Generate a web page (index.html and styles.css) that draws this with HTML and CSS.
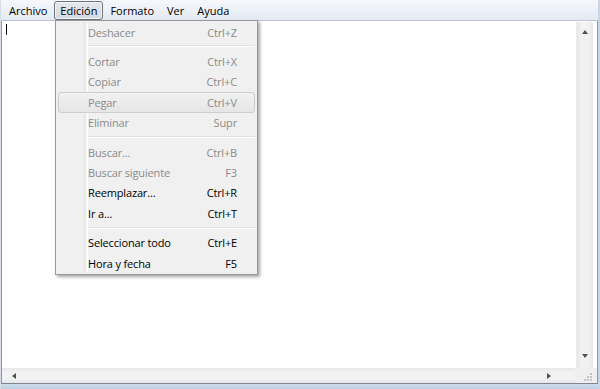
FILE: index.html
```html
<!DOCTYPE html>
<html lang="es">
<head>
    <meta charset="UTF-8" />
    <title>Bloc de notas</title>
    <link rel="stylesheet" href="styles.css">
</head>
<body>
    <div class="window">
        <nav class="menubar">
            <span class="menu-title">Archivo</span>
            <span class="menu-title open">Edición</span>
            <span class="menu-title">Formato</span>
            <span class="menu-title">Ver</span>
            <span class="menu-title">Ayuda</span>
        </nav>
        <div class="editor">
            <div class="text-area"><span class="caret"></span></div>
            <div class="vscroll">
                <span class="arrow up"></span>
                <span class="arrow down"></span>
            </div>
        </div>
        <div class="hscroll-row">
            <div class="hscroll">
                <span class="arrow left"></span>
                <span class="arrow right"></span>
            </div>
            <div class="grip">
                <svg width="12" height="12" viewBox="0 0 12 12">
                    <rect x="9" y="3" width="2" height="2" fill="#c4c4c4"/>
                    <rect x="6" y="6" width="2" height="2" fill="#c4c4c4"/>
                    <rect x="9" y="6" width="2" height="2" fill="#c4c4c4"/>
                    <rect x="3" y="9" width="2" height="2" fill="#c4c4c4"/>
                    <rect x="6" y="9" width="2" height="2" fill="#c4c4c4"/>
                    <rect x="9" y="9" width="2" height="2" fill="#c4c4c4"/>
                </svg>
            </div>
        </div>
        <div class="frame-bottom"></div>

        <div class="dropdown">
            <div class="item disabled"><span>Deshacer</span><span>Ctrl+Z</span></div>
            <div class="sep"></div>
            <div class="item disabled"><span>Cortar</span><span>Ctrl+X</span></div>
            <div class="item disabled"><span>Copiar</span><span>Ctrl+C</span></div>
            <div class="item disabled hover"><span>Pegar</span><span>Ctrl+V</span></div>
            <div class="item disabled"><span>Eliminar</span><span>Supr</span></div>
            <div class="sep"></div>
            <div class="item disabled"><span>Buscar...</span><span>Ctrl+B</span></div>
            <div class="item disabled"><span>Buscar siguiente</span><span>F3</span></div>
            <div class="item"><span>Reemplazar...</span><span>Ctrl+R</span></div>
            <div class="item"><span>Ir a...</span><span>Ctrl+T</span></div>
            <div class="sep"></div>
            <div class="item"><span>Seleccionar todo</span><span>Ctrl+E</span></div>
            <div class="item"><span>Hora y fecha</span><span>F5</span></div>
        </div>
    </div>
</body>
</html>
```

FILE: styles.css
```css
* {
    margin: 0;
    padding: 0;
    box-sizing: border-box;
}

body {
    width: 600px;
    height: 389px;
    overflow: hidden;
    background: #fff;
    font-family: "Open Sans", "Noto Sans", sans-serif;
    font-size: 11px;
    letter-spacing: -0.15px;
    color: #000;
}

.window {
    position: relative;
    height: 389px;
    display: flex;
    flex-direction: column;
    border-left: 1px solid #d6dde8;
    border-right: 2px solid #c9d6e6;
}

.menubar {
    height: 21px;
    display: flex;
    align-items: center;
    padding-left: 2px;
    letter-spacing: 0;
    background: linear-gradient(#f6f8fc, #e4e9f3);
    border-bottom: 1px solid #b9c2cf;
}

.menu-title {
    padding: 0 5px;
    margin-right: 1px;
    line-height: 17px;
    border: 1px solid transparent;
    border-radius: 3px;
}

.menu-title.open {
    border-color: #6f747a;
    background: linear-gradient(#e4e8ee, #d4dae2);
    box-shadow: inset 0 0 0 1px #f2f4f7;
}

.editor {
    flex: 1;
    display: flex;
    border-left: 1px solid #8e96a0;
    border-right: 1px solid #8e96a0;
}

.text-area {
    flex: 1;
    padding: 3px 0 0 4px;
}

.caret {
    display: block;
    width: 1px;
    height: 11px;
    background: #000;
}

.vscroll {
    width: 17px;
    margin: 1px 4px 0 0;
    background: linear-gradient(90deg, #e6e6e6, #f2f2f2 30%, #f2f2f2 70%, #e6e6e6);
    border-left: 1px solid #ececec;
    display: flex;
    flex-direction: column;
    justify-content: space-between;
    align-items: center;
    padding: 8px 0 10px;
}

.arrow {
    width: 0;
    height: 0;
    border: 3px solid transparent;
}

.arrow.up { border-bottom: 4px solid #505050; border-top-width: 0; }
.arrow.down { border-top: 4px solid #505050; border-bottom-width: 0; }
.arrow.left { border-right: 4px solid #505050; border-left-width: 0; }
.arrow.right { border-left: 4px solid #505050; border-right-width: 0; }

.hscroll-row {
    height: 16px;
    display: flex;
    border-left: 1px solid #8e96a0;
    border-right: 1px solid #8e96a0;
    border-bottom: 1px solid #7d8590;
    background: #efefef;
}

.hscroll {
    flex: 1;
    display: flex;
    justify-content: space-between;
    align-items: center;
    padding: 0 24px 0 10px;
    background: linear-gradient(#e6e6e6, #f2f2f2 30%, #f2f2f2 70%, #e6e6e6);
}

.grip {
    width: 22px;
    display: flex;
    align-items: flex-end;
    justify-content: flex-end;
    padding: 0 4px 1px 0;
}

.frame-bottom {
    height: 5px;
    background: linear-gradient(#cfdcec, #bdd0e6);
}

.dropdown {
    position: absolute;
    left: 54px;
    top: 20px;
    width: 203px;
    padding: 1px 2px 1px;
    background: #f0f0f0;
    border: 1px solid #979797;
    box-shadow: 2px 2px 3px rgba(0, 0, 0, 0.35);
}

.dropdown::before {
    content: "";
    position: absolute;
    top: 2px;
    bottom: 2px;
    left: 28px;
    width: 2px;
    border-left: 1px solid #e2e3e3;
    border-right: 1px solid #fff;
}

.item {
    position: relative;
    height: 20.4px;
    display: flex;
    align-items: center;
    justify-content: space-between;
    padding: 0 17px 0 29px;
    border: 1px solid transparent;
    border-radius: 3px;
}

.item.disabled {
    color: #8a8a8a;
}

.item.hover {
    border-color: #cdcdcd;
    background: linear-gradient(#f1f1f1, #e6e6e6);
    z-index: 1;
}

.sep {
    height: 9px;
    margin-left: 30px;
    position: relative;
}

.sep::after {
    content: "";
    position: absolute;
    left: 0;
    right: 0;
    top: 3px;
    border-top: 1px solid #e0e0e0;
    border-bottom: 1px solid #fff;
}
```
